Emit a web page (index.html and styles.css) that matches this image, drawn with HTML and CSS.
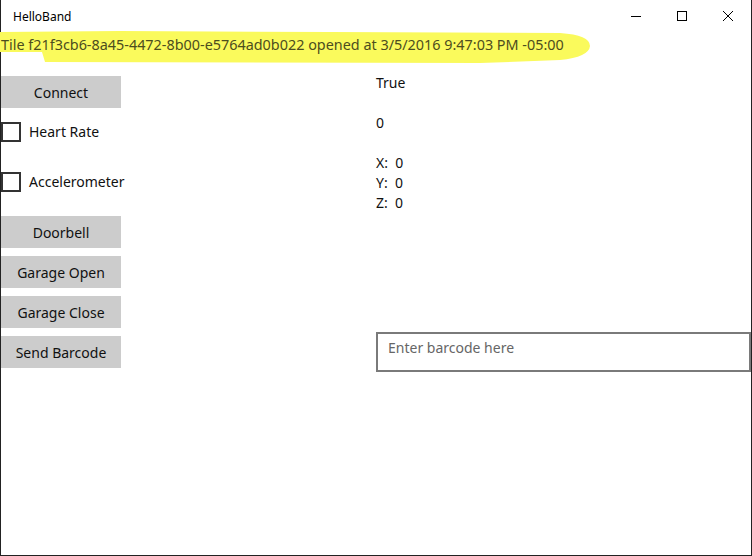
FILE: index.html
```html
<!DOCTYPE html>
<html>
<head>
<meta charset="utf-8">
<link rel="stylesheet" href="styles.css">
</head>
<body>
<div class="window">
  <div class="titlebar">
    <span class="title">HelloBand</span>
    <div class="controls">
      <span class="ctl"><svg width="10" height="10" viewBox="0 0 10 10"><path d="M0 5.5H10" stroke="#000" stroke-width="1"/></svg></span>
      <span class="ctl"><svg width="10" height="10" viewBox="0 0 10 10"><rect x="0.5" y="0.5" width="9" height="9" fill="none" stroke="#000" stroke-width="1"/></svg></span>
      <span class="ctl"><svg width="10" height="10" viewBox="0 0 10 10"><path d="M0 0L10 10M10 0L0 10" stroke="#000" stroke-width="1"/></svg></span>
    </div>
  </div>
  <div class="tile">
    <svg class="marker" width="600" height="40" viewBox="0 0 600 40"><path d="M0 3 L120 2 L330 3 L560 4 Q590 6 590 17 Q589 28 560 31 L480 34 L45 33 L42 23 L0 23 Z" fill="#fafa5c"/></svg>
    <span class="tile-text">Tile f21f3cb6-8a45-4472-8b00-e5764ad0b022 opened at 3/5/2016 9:47:03 PM -05:00</span>
  </div>
  <div class="main">
    <div class="left">
      <button class="btn">Connect</button>
      <label class="check"><span class="box"></span>Heart Rate</label>
      <label class="check"><span class="box"></span>Accelerometer</label>
      <button class="btn">Doorbell</button>
      <button class="btn">Garage Open</button>
      <button class="btn">Garage Close</button>
      <button class="btn">Send Barcode</button>
    </div>
    <div class="right">
      <div class="line">True</div>
      <div class="line gap">0</div>
      <div class="line gap">X:&nbsp; 0</div>
      <div class="line">Y:&nbsp; 0</div>
      <div class="line">Z:&nbsp; 0</div>
      <div class="textbox">Enter barcode here</div>
    </div>
  </div>
</div>
</body>
</html>
```
FILE: styles.css
```css
* { box-sizing: border-box; }
html, body { margin: 0; padding: 0; background: #fff; }
body { font-family: "Noto Sans", "Open Sans", sans-serif; color: #111; }
.window {
  width: 752px;
  height: 556px;
  border: 1px solid #222;
  border-top: none;
  background: #fff;
}
.titlebar {
  height: 32px;
  display: flex;
  align-items: center;
  padding-left: 12px;
}
.title { font-size: 12px; color: #000; }
.controls { margin-left: auto; display: flex; }
.ctl {
  width: 46px;
  height: 32px;
  display: flex;
  align-items: center;
  justify-content: center;
}
.tile {
  position: relative;
  height: 40px;
  padding-top: 1px;
}
.marker { position: absolute; left: -1px; top: -3px; }
.tile-text {
  position: relative;
  font-size: 14.4px;
  line-height: 20px;
  color: #4d4d1e;
  white-space: nowrap;
}
.main {
  display: grid;
  grid-template-columns: 375px 375px;
}
.left { display: flex; flex-direction: column; align-items: flex-start; padding-top: 4px; }
.btn {
  width: 120px;
  height: 32px;
  border: none;
  background: #cccccc;
  font-family: inherit;
  font-size: 14px;
  color: #111;
  padding: 0;
  margin-bottom: 8px;
}
.check {
  display: flex;
  align-items: center;
  height: 31px;
  font-size: 14px;
  margin-bottom: 19px;
}
.box {
  width: 20px;
  height: 20px;
  border: 2px solid #333;
  margin-right: 8px;
}
.right { display: flex; flex-direction: column; padding-top: 1px; }
.line { font-size: 14px; line-height: 20px; }
.gap { margin-top: 20px; }
.textbox {
  margin-top: 119px;
  height: 40px;
  width: 375px;
  border: 2px solid #7a7a7a;
  font-size: 14px;
  color: #666;
  padding: 4px 10px;
  line-height: 20px;
}
```
